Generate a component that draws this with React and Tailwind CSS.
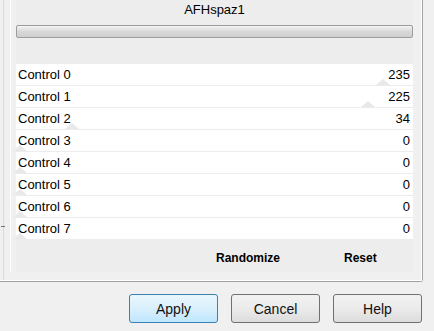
import React from "react";

const rows = [
  ["Control 0", 235, 367],
  ["Control 1", 225, 352],
  ["Control 2", 34, 56],
  ["Control 3", 0, 4],
  ["Control 4", 0, 4],
  ["Control 5", 0, 4],
  ["Control 6", 0, 4],
  ["Control 7", 0, 4],
];

function Row({ label, value, pos }) {
  return (
    <div className="relative h-[22px] flex flex-col">
      <div className="h-[21px] bg-white flex items-center justify-between pl-[2px] pr-[3px] pb-[1px] text-[13px] text-black leading-none">
        <span>{label}</span>
        <span>{value}</span>
      </div>
      <div className="h-[1px] bg-[#ececec]" />
      <svg className="absolute bottom-[1px]" style={{ left: pos - 7 }} width="14" height="6">
        <polygon points="0,6 7,0 14,6" fill="#e9e9e9" />
      </svg>
    </div>
  );
}

function Btn({ children, primary }) {
  return (
    <button
      className={
        "w-[89px] h-[29px] rounded-[3px] border text-[14px] text-[#111] leading-none " +
        (primary
          ? "border-[#3c7fb1] bg-gradient-to-b from-[#eaf6fd] via-[#d9f0fc] to-[#bee6fd]"
          : "border-[#707070] bg-gradient-to-b from-[#f2f2f2] via-[#ebebeb] to-[#dcdcdc]")
      }
    >
      {children}
    </button>
  );
}

export default function App() {
  return (
    <div
      className="w-[434px] h-[331px] bg-[#f0f0f0] overflow-hidden flex flex-col"
      style={{ fontFamily: '"Liberation Sans", Arial, sans-serif' }}
    >
      <div className="w-[423px] h-[282px] border-r border-b border-[#a0a0a0] rounded-br-[3px] flex">
        <div className="w-[422px] h-[281px] border-r border-b border-white flex">
          {/* left strip */}
          <div className="w-[10px] h-full flex">
            <div className="w-[3px]" />
            <div className="w-[1px] h-full bg-[#dadada] relative">
              <span className="absolute left-[-2px] top-[226px] w-[4px] h-[1px] bg-[#707070]" />
            </div>
            <div className="w-[6px]" />
          </div>
          <div className="w-[1px] h-[272px] bg-white" />
          <div className="w-[5px]" />
          {/* main content */}
          <div className="w-[397px] h-[272px] bg-[#ededed] flex flex-col">
            <div className="h-[25px] flex items-center justify-center text-[13px] text-black pb-[5px]">
              AFHspaz1
            </div>
            <div className="h-[13px] rounded-[2px] border border-[#9c9c9c] bg-gradient-to-b from-[#f4f4f4] via-[#d8d8d8] to-[#cfcfcf]" />
            <div className="h-[26px]" />
            <div className="flex flex-col">
              {rows.map(([l, v, p]) => (
                <Row key={l} label={l} value={v} pos={p} />
              ))}
            </div>
            <div className="flex-1 flex items-center text-[12px] font-bold text-black pt-[3px]">
              <span className="ml-[200px]">Randomize</span>
              <span className="ml-[64px]">Reset</span>
            </div>
          </div>
        </div>
      </div>
      <div className="flex gap-[13px] pl-[129px] mt-[12px]">
        <Btn primary>Apply</Btn>
        <Btn>Cancel</Btn>
        <Btn>Help</Btn>
      </div>
    </div>
  );
}
